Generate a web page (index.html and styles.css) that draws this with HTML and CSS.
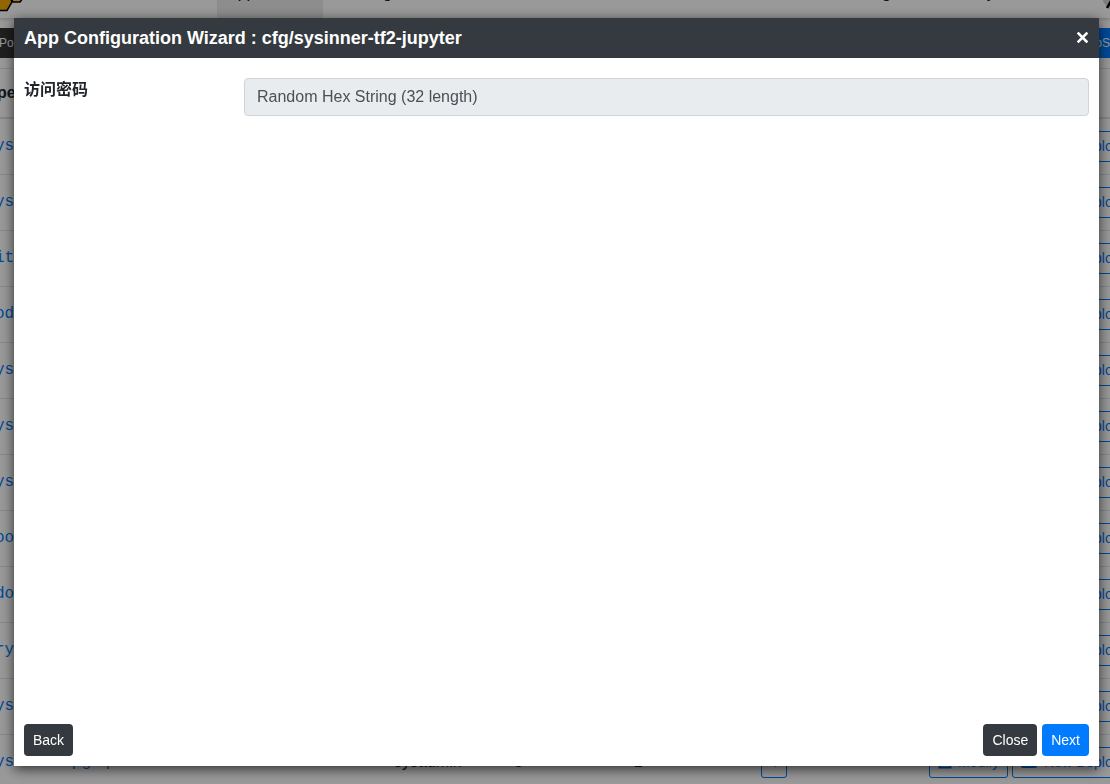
FILE: index.html
```html
<!DOCTYPE html>
<html lang="en">
<head>
<meta charset="utf-8">
<title>App Configuration Wizard</title>
<link rel="stylesheet" href="styles.css">
</head>
<body>
<div class="page" inert>
  <nav class="nav">
    <svg class="logo" width="24" height="32" viewBox="0 0 24 32" aria-hidden="true">
      <path d="M11 18 L13 13 H20 L23 18 L20 22 H13Z" fill="#ffc94d" stroke="#000" stroke-width="1.5"/>
      <path d="M-6 22 L-1 13 H8 L12 22 L7 30.5 H-2Z" fill="#f2ab00" stroke="#000" stroke-width="1.5"/>
    </svg>
    <a class="nav-item nav-app" href="#">App</a>
    <a class="nav-item nav-second" href="#">g</a>
    <a class="nav-item nav-third" href="#">g</a>
    <a class="nav-item nav-last" href="#">y</a>
    <svg class="avatar" width="20" height="36" viewBox="0 0 20 36" aria-hidden="true">
      <circle cx="16" cy="9" r="16" fill="#d0d0d0"/>
      <path d="M5 22 L9 15 H20" fill="none" stroke="#000" stroke-width="2.5"/>
    </svg>
  </nav>
  <div class="toolbar">
    <button class="tool tool-dark" type="button">Po</button>
    <button class="tool tool-blue" type="button">pS</button>
  </div>
  <table class="list">
    <colgroup><col><col class="col-user"><col class="col-count"><col class="col-version"><col class="col-link"><col class="col-actions"></colgroup>
    <thead><tr><th class="name-head">pe</th><th></th><th></th><th></th><th></th><th></th></tr></thead>
    <tbody id="rows"></tbody>
  </table>
</div>
<div class="backdrop"></div>
<section class="modal" role="dialog" aria-modal="true" aria-labelledby="modal-title">
  <header class="modal-header">
    <h1 class="modal-title" id="modal-title">App Configuration Wizard : cfg/sysinner-tf2-jupyter</h1>
    <button class="modal-close" type="button" aria-label="Dismiss">
      <svg width="11" height="11" viewBox="0 0 11 11" aria-hidden="true"><path d="M1.5 1.5 L9.5 9.5 M9.5 1.5 L1.5 9.5" stroke="#fff" stroke-width="2.5" stroke-linecap="square"/></svg>
    </button>
  </header>
  <form class="modal-body">
    <label class="field-label" for="password">访问密码</label>
    <input class="field-input" id="password" type="text" value="Random Hex String (32 length)" readonly>
  </form>
  <footer class="modal-footer">
    <button class="btn btn-dark btn-back" type="button">Back</button>
    <button class="btn btn-dark" type="button">Close</button>
    <button class="btn btn-primary" type="button">Next</button>
  </footer>
</section>
<script src="rows.js"></script>
</body>
</html>
```
FILE: styles.css
```css
* { box-sizing: border-box; }
body {
  margin: 0;
  overflow: hidden;
  background: #fff;
  color: #212529;
  font: 16px/24px "Liberation Sans", "Noto Sans CJK SC", sans-serif;
}
button, input { font-family: inherit; }
.page { height: 100vh; overflow: hidden; }
.nav {
  display: flex;
  height: 56px;
  margin-top: -38px;
  box-shadow: 0 1px 4px rgba(0, 0, 0, .25);
}
.logo { flex: none; margin-top: 18px; }
.nav-item {
  padding: 19px 10px 0;
  color: #212529;
  text-decoration: none;
}
.nav-app { width: 106px; margin-left: 193px; background: #ebebeb; color: #000; }
.nav-second { margin-left: 50px; }
.nav-third { margin-left: 470px; }
.nav-last { margin-left: 76px; }
.avatar { flex: none; margin: 24px -12px 0 auto; }
.toolbar {
  display: flex;
  justify-content: space-between;
  margin: 10px 0;
}
.tool {
  height: 30px;
  padding: 0;
  border: 0;
  color: #fff;
  font-size: 12px;
}
.tool-dark { width: 80px; background: #343434; text-align: left; text-indent: -1px; }
.tool-blue { width: 80px; background: #007bff; text-align: right; }
.list {
  width: calc(100% + 25px);
  table-layout: fixed;
  border-collapse: separate;
  border-spacing: 0;
}
.col-user, .col-count { width: 120px; }
.col-version { width: 127px; }
.col-link { width: 168px; }
.col-actions { width: 214px; }
.list th {
  height: 51px;
  padding: 0;
  border-top: 1px solid #dee2e6;
  border-bottom: 2px solid #dee2e6;
  text-align: left;
}
.list .name-head { text-indent: -3px; }
.list td {
  height: 56px;
  padding: 0 8px 2px;
  border-top: 1px solid #dee2e6;
  white-space: nowrap;
}
.list tbody tr:first-child td { height: 55px; border-top: 0; }
.list .name { padding: 0 0 2px; text-indent: -5px; }
.list .has-button { padding-bottom: 0; }
.name a {
  color: #007bff;
  font-family: "Liberation Mono", monospace;
  text-decoration: none;
}
.actions { display: flex; gap: 4px; }
.outline {
  display: flex;
  flex: none;
  align-items: center;
  gap: 6px;
  height: 31px;
  padding: 0 8px 2px;
  border: 1px solid #007bff;
  border-radius: 3px;
  background: transparent;
  color: #007bff;
  font-size: 14px;
}
.outline-deploy { gap: 7px; }
.backdrop {
  position: fixed;
  inset: 0;
  background: rgba(0, 0, 0, .4);
}
.modal {
  position: fixed;
  inset: 18px 11px 18px 14px;
  display: flex;
  flex-direction: column;
  background: #fff;
  box-shadow: 0 3px 12px rgba(0, 0, 0, .7);
}
.modal-header {
  display: flex;
  align-items: center;
  justify-content: space-between;
  height: 40px;
  padding: 0 10px;
  background: #343a40;
  color: #fff;
}
.modal-title { margin: 0; font-size: 18px; line-height: 24px; }
.modal-close {
  display: flex;
  padding: 1px 1px 3px;
  border: 0;
  background: transparent;
}
.modal-body {
  display: grid;
  flex: 1;
  grid-template-columns: 220px 1fr;
  align-items: start;
  padding: 20px 10px;
}
.field-label { font-weight: 700; }
.field-input {
  width: 100%;
  height: 38px;
  padding: 6px 12px;
  border: 1px solid #ced4da;
  border-radius: 4px;
  background: #e9ecef;
  color: #495057;
  font-size: 16px;
}
.modal-footer { display: flex; gap: 5px; padding: 10px; }
.btn {
  height: 32px;
  padding: 0 9px;
  border: 0;
  border-radius: 4px;
  color: #fff;
  font-size: 14px;
}
.btn-dark { background: #343a40; }
.btn-primary { background: #007bff; }
.btn-back { margin-right: auto; }
```
FILE: rows.js
```js
const names = ["ys", "ys", "it", "od", "ys", "ys", "ys", "oo", "do", "ry", "ys", "ysinner-pgsql"];
const modifyIcon = '<svg width="14" height="14" viewBox="0 0 14 14" aria-hidden="true"><path d="M1.5 2 H12.5 V12.5 H1.5Z" fill="none" stroke="currentColor" stroke-width="2"/></svg>';
const deployIcon = '<svg width="16" height="12" viewBox="0 0 16 12" aria-hidden="true"><rect y="1" width="16" height="11" rx="2" fill="currentColor"/></svg>';
document.getElementById("rows").innerHTML = names.map((name, i) => {
  const last = i === names.length - 1;
  return `<tr>
    <td class="name"><a href="#">${name}</a></td>
    <td>${last ? "sysadmin" : ""}</td>
    <td>${last ? "3" : ""}</td>
    <td>${last ? "2" : ""}</td>
    <td class="has-button">${last ? '<button class="outline" type="button">4</button>' : ""}</td>
    <td class="has-button"><div class="actions">
      <button class="outline" type="button">${modifyIcon}Modify</button>
      <button class="outline outline-deploy" type="button">${deployIcon}New Deploy</button>
    </div></td>
  </tr>`;
}).join("");
```
